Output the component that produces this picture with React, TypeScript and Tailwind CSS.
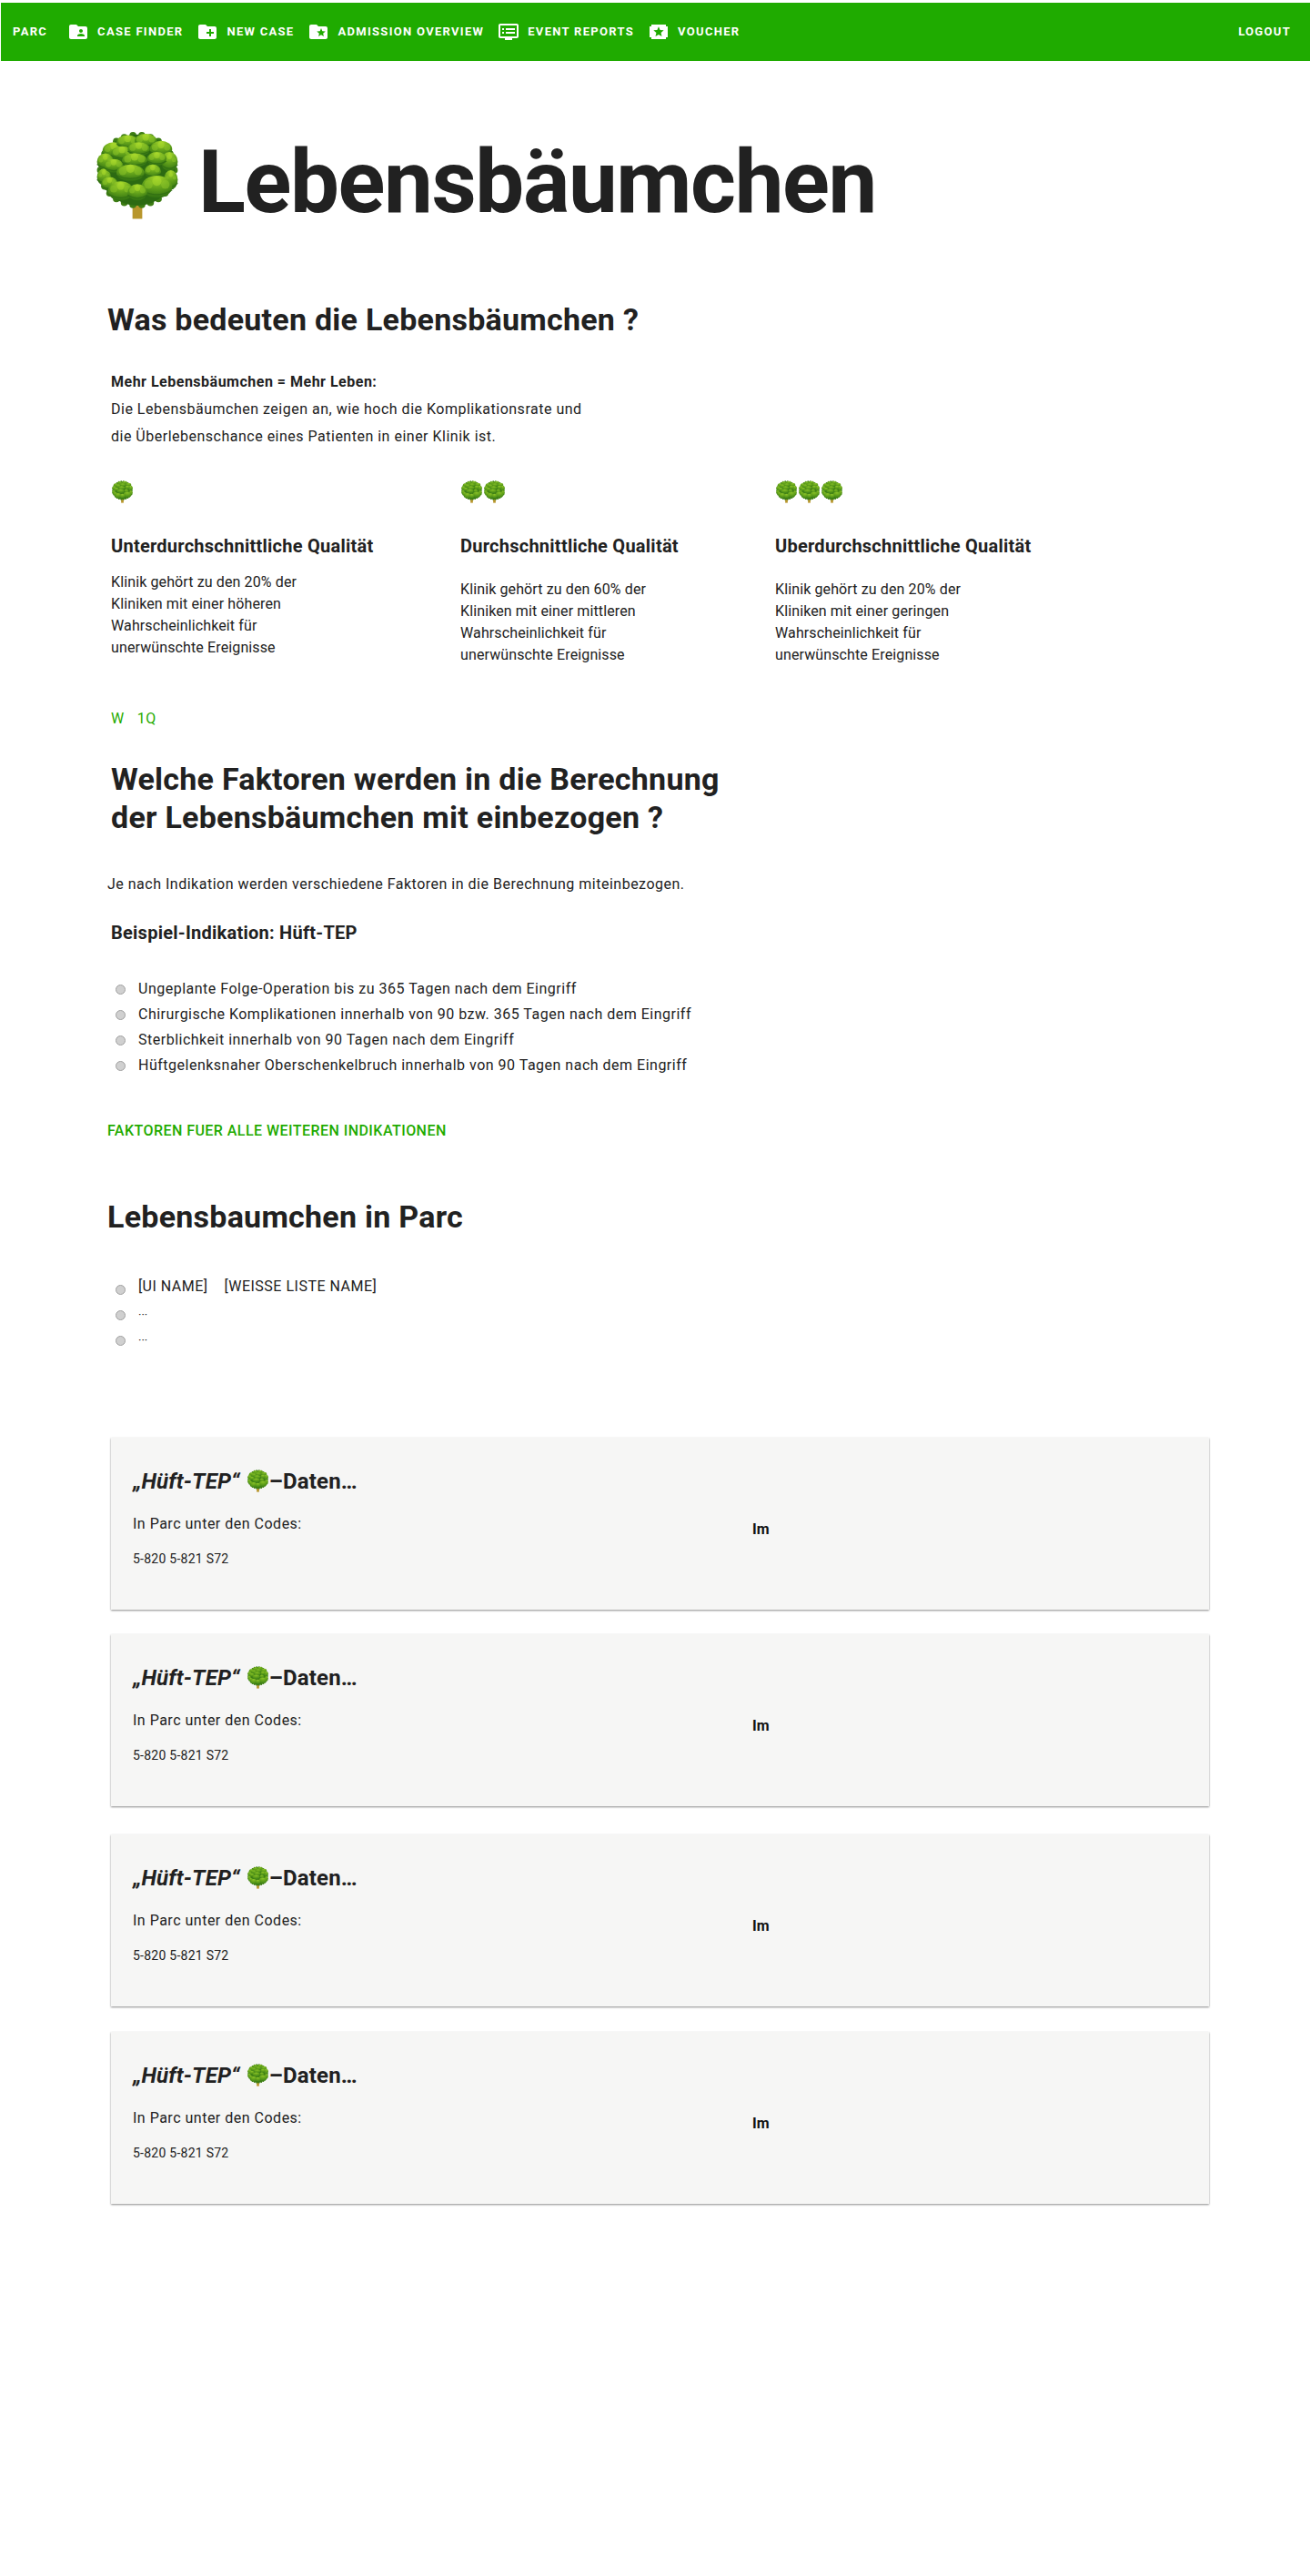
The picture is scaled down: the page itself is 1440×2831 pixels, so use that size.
import React, { useId } from 'react';

// clumps of leaves, back to front: [cx, cy, rx, ry]
const clumps: number[][] = [
  [15, 14, 8, 6], [25, 8, 8, 5], [38, 7, 8, 5], [49, 13, 8, 6],
  [9, 22, 6, 6], [55, 22, 6, 7], [8, 33, 5, 6], [56, 35, 5, 7],
  [21, 16, 8, 5], [33, 13, 8, 5], [46, 20, 7, 5], [15, 25, 7, 5],
  [30, 21, 9, 5], [43, 29, 6, 5], [12, 38, 6, 5], [27, 30, 10, 6],
  [20, 43, 9, 7], [46, 40, 11, 8], [32, 44, 7, 6],
];

// bumps round the crown, so the edge is not a clean oval
const bumps = Array.from({ length: 26 }).map((_, i) => {
  const a = (i / 26) * Math.PI * 2;
  return [32 + Math.cos(a) * 26.5, 28 + Math.sin(a) * 25];
});

const Tree = ({ size, className = '' }: { size: number; className?: string }) => {
  const id = useId();
  const big = size > 40;
  return (
    <svg width={size} height={size} viewBox="0 0 64 64" className={`inline-block shrink-0 ${className}`}>
      <defs>
        <radialGradient id={id} cx="50%" cy="10%" r="90%">
          <stop offset="0%" stopColor={big ? '#a8d82c' : '#8cc428'} />
          <stop offset="50%" stopColor="#64a31b" />
          <stop offset="100%" stopColor={big ? '#2f7012' : '#3f8416'} />
        </radialGradient>
      </defs>
      <rect x="28.500" y="50" width="7" height="13" fill="#b8962c" />
      {bumps.map(([cx, cy]) => (
        <circle key={`${cx}-${cy}`} cx={cx} cy={cy} r="2.500" fill="#3d7d14" />
      ))}
      <ellipse cx="32" cy="28" rx="27" ry="25.500" fill={big ? '#2c6a12' : '#3d7d14'} />
      {clumps.map(([cx, cy, rx, ry]) => (
        <g key={`${cx}-${cy}`}>
          <ellipse cx={cx} cy={cy} rx={rx} ry={ry} fill={`url(#${id})`} />
          {big && (
            <>
              <circle cx={cx - rx * 0.55} cy={cy - ry * 0.2} r={rx * 0.28} fill="#8cc428" opacity="0.55" />
              <circle cx={cx} cy={cy - ry * 0.5} r={rx * 0.3} fill="#a8d82c" opacity="0.55" />
              <circle cx={cx + rx * 0.55} cy={cy - ry * 0.2} r={rx * 0.28} fill="#8cc428" opacity="0.55" />
              <path d={`M${cx - rx} ${cy + ry * 0.3} Q${cx} ${cy + ry * 1.1} ${cx + rx} ${cy + ry * 0.3}`} fill="none" stroke="#2c6a12" strokeWidth="0.8" opacity="0.7" />
            </>
          )}
        </g>
      ))}
    </svg>
  );
};

const navIcons: Record<string, React.ReactNode> = {
  shared: <path d="M20 6h-8l-2-2H4c-1.100 0-2 .9-2 2v12c0 1.100.9 2 2 2h16c1.100 0 2-.9 2-2V8c0-1.100-.9-2-2-2zm-5 3c1.100 0 2 .9 2 2s-.9 2-2 2-2-.9-2-2 .9-2 2-2zm4 8h-8v-1c0-1.330 2.670-2 4-2s4 .67 4 2v1z" />,
  add: <path d="M20 6h-8l-2-2H4c-1.110 0-2 .89-2 2v12c0 1.110.89 2 2 2h16c1.110 0 2-.89 2-2V8c0-1.110-.89-2-2-2zm-1 8h-3v3h-2v-3h-3v-2h3V9h2v3h3v2z" />,
  special: <path d="M20 6h-8l-2-2H4c-1.100 0-2 .9-2 2v12c0 1.100.9 2 2 2h16c1.100 0 2-.9 2-2V8c0-1.100-.9-2-2-2zm-2.060 11L15 15.280 12.060 17l.78-3.330-2.590-2.240 3.410-.29L15 8l1.340 3.140 3.410.29-2.590 2.240.78 3.330z" />,
  reports: <path d="M21 3H3c-1.100 0-2 .9-2 2v12c0 1.100.9 2 2 2h5v2h8v-2h5c1.100 0 2-.9 2-2V5c0-1.100-.9-2-2-2zm0 14H3V5h18v12zM5 8h2v2H5V8zm4 0h10v2H9V8zm-4 4h2v2H5v-2zm4 0h10v2H9v-2z" />,
  voucher: <path d="M20 4H4v2H2v12h2v2h16v-2h2V6h-2V4zm-4.500 13L12 14.900 8.500 17l.93-3.970L6.340 10.360l4.060-.34L12 6.270l1.600 3.750 4.060.34-3.090 2.670L15.500 17z" />,
};

const NavItem = ({ icon, label }: { icon: string; label: string }) => (
  <div className="flex items-center gap-[9px]">
    <svg width={24} height={24} viewBox="0 0 24 24" fill="#fff">{navIcons[icon]}</svg>
    <span>{label}</span>
  </div>
);

const Bullet = ({ children, low = false }: { children: React.ReactNode; low?: boolean }) => (
  <li className="flex h-[28px] items-center">
    <span className={`ml-[5px] mr-[14px] h-[11px] w-[11px] rounded-full border border-[#a0a0a0] bg-[#d0d0d0] ${low ? 'mt-[6px]' : ''}`} />
    <span>{children}</span>
  </li>
);

const QualityCol = ({ count, title, lines, width, bodyGap }: { count: number; title: string; lines: string[]; width: string; bodyGap: string }) => (
  <div className={width}>
    <div className="flex h-[26px] items-center">
      {Array.from({ length: count }).map((_, i) => (
        <Tree key={i} size={25} />
      ))}
    </div>
    <h3 className="mt-[33px] text-[20px] leading-[28px] font-bold tracking-[0.25px] text-[#212121]">{title}</h3>
    <div className={`${bodyGap} text-[16px] leading-[24px] tracking-[0.12px] text-[#212121]`}>
      {lines.map((l) => (
        <div key={l}>{l}</div>
      ))}
    </div>
  </div>
);

const DataCard = ({ gap }: { gap: string }) => (
  <div className={`${gap} mr-[111px] flex h-[189px] bg-[#f6f6f5] pt-[32px] pl-[24px] shadow-[0_1px_2px_rgba(0,0,0,0.45)]`}>
    <div className="w-[681px]">
      <h3 className="flex h-[32px] items-center text-[24px] font-bold tracking-[0.15px] text-[#212121]">
        <i>„Hüft-TEP“</i>
        <Tree size={25} className="mb-[2px] ml-[7px]" />
        <span>–Daten…</span>
      </h3>
      <p className="mt-[19px] text-[16px] leading-[24px] tracking-[0.5px] text-[#212121]">In Parc unter den Codes:</p>
      <p className="mt-[14px] text-[14px] leading-[24px] tracking-[0.25px] text-[#212121]">5-820 5-821 S72</p>
    </div>
    <div className="pt-[57px] text-[16px] leading-[24px] font-bold text-[#111]">Im</div>
  </div>
);

const Dots = () => <span className="mt-[6px] block text-[13px] leading-[16px] tracking-normal">···</span>;

export default function App() {
  return (
    <div className="h-[2831px] overflow-hidden bg-white font-['Roboto',sans-serif]">
      <div className="mt-[3px] ml-[1px] flex h-[64px] items-center bg-[#1fab00] pr-[21px] pl-[13px] text-[13px] font-bold tracking-[1.3px] text-white">
        <span className="mr-[22px]">PARC</span>
        <div className="flex items-center gap-[15px]">
          <NavItem icon="shared" label="CASE FINDER" />
          <NavItem icon="add" label="NEW CASE" />
          <NavItem icon="special" label="ADMISSION OVERVIEW" />
          <NavItem icon="reports" label="EVENT REPORTS" />
          <NavItem icon="voucher" label="VOUCHER" />
        </div>
        <span className="ml-auto">LOGOUT</span>
      </div>

      <div className="pl-[118px]">
        <div className="-ml-[16px] mt-[77px] flex h-[112px] items-center">
          <Tree size={98} className="mb-[14px]" />
          <h1 className="ml-[18px] text-[96px] leading-[112px] font-bold tracking-[-1.400px] text-[#212121]">Lebensbäumchen</h1>
        </div>

        <h2 className="mt-[73px] text-[34px] leading-[44px] font-bold tracking-[0.25px] text-[#212121]">Was bedeuten die Lebensbäumchen ?</h2>

        <div className="mt-[32px] pl-[4px] text-[16px] leading-[30px] tracking-[0.5px] text-[#212121]">
          <p className="font-bold">Mehr Lebensbäumchen = Mehr Leben:</p>
          <p>Die Lebensbäumchen zeigen an, wie hoch die Komplikationsrate und</p>
          <p>die Überlebenschance eines Patienten in einer Klinik ist.</p>
        </div>

        <div className="mt-[32px] flex pl-[4px]">
          <QualityCol count={1} width="w-[384px]" bodyGap="mt-[14px]" title="Unterdurchschnittliche Qualität" lines={['Klinik gehört zu den 20% der', 'Kliniken mit einer höheren', 'Wahrscheinlichkeit für', 'unerwünschte Ereignisse']} />
          <QualityCol count={2} width="w-[346px]" bodyGap="mt-[22px]" title="Durchschnittliche Qualität" lines={['Klinik gehört zu den 60% der', 'Kliniken mit einer mittleren', 'Wahrscheinlichkeit für', 'unerwünschte Ereignisse']} />
          <QualityCol count={3} width="w-[346px]" bodyGap="mt-[22px]" title="Uberdurchschnittliche Qualität" lines={['Klinik gehört zu den 20% der', 'Kliniken mit einer geringen', 'Wahrscheinlichkeit für', 'unerwünschte Ereignisse']} />
        </div>

        <div className="mt-[46px] flex pl-[4px] text-[16px] leading-[24px] tracking-[0.5px] text-[#1fab00]">
          <span>W</span>
          <span className="ml-[14px]">1Q</span>
        </div>

        <h2 className="mt-[33px] pl-[4px] text-[34px] leading-[42px] font-bold tracking-[0.25px] text-[#212121]">
          Welche Faktoren werden in die Berechnung<br />der Lebensbäumchen mit einbezogen ?
        </h2>

        <p className="mt-[41px] text-[16px] leading-[24px] tracking-[0.5px] text-[#212121]">Je nach Indikation werden verschiedene Faktoren in die Berechnung miteinbezogen.</p>

        <h3 className="mt-[27px] pl-[4px] text-[20px] leading-[28px] font-bold tracking-[0.25px] text-[#212121]">Beispiel-Indikation: Hüft-TEP</h3>

        <ul className="mt-[34px] pl-[4px] text-[16px] tracking-[0.5px] text-[#212121]">
          <Bullet>Ungeplante Folge-Operation bis zu 365 Tagen nach dem Eingriff</Bullet>
          <Bullet>Chirurgische Komplikationen innerhalb von 90 bzw. 365 Tagen nach dem Eingriff</Bullet>
          <Bullet>Sterblichkeit innerhalb von 90 Tagen nach dem Eingriff</Bullet>
          <Bullet>Hüftgelenksnaher Oberschenkelbruch innerhalb von 90 Tagen nach dem Eingriff</Bullet>
        </ul>

        <p className="mt-[46px] text-[16px] leading-[24px] font-medium tracking-[0.45px] text-[#1fab00]">FAKTOREN FUER ALLE WEITEREN INDIKATIONEN</p>

        <h2 className="mt-[60px] text-[34px] leading-[44px] font-bold tracking-[0.25px] text-[#212121]">Lebensbaumchen in Parc</h2>

        <ul className="mt-[41px] pl-[4px] text-[16px] tracking-[0.5px] text-[#212121]">
          <Bullet low>[UI NAME]&nbsp;&nbsp;&nbsp; [WEISSE LISTE NAME]</Bullet>
          <Bullet low><Dots /></Bullet>
          <Bullet low><Dots /></Bullet>
        </ul>

        <div className="pl-[4px]">
          <DataCard gap="mt-[96px]" />
          <DataCard gap="mt-[27px]" />
          <DataCard gap="mt-[31px]" />
          <DataCard gap="mt-[28px]" />
        </div>
      </div>
    </div>
  );
}
